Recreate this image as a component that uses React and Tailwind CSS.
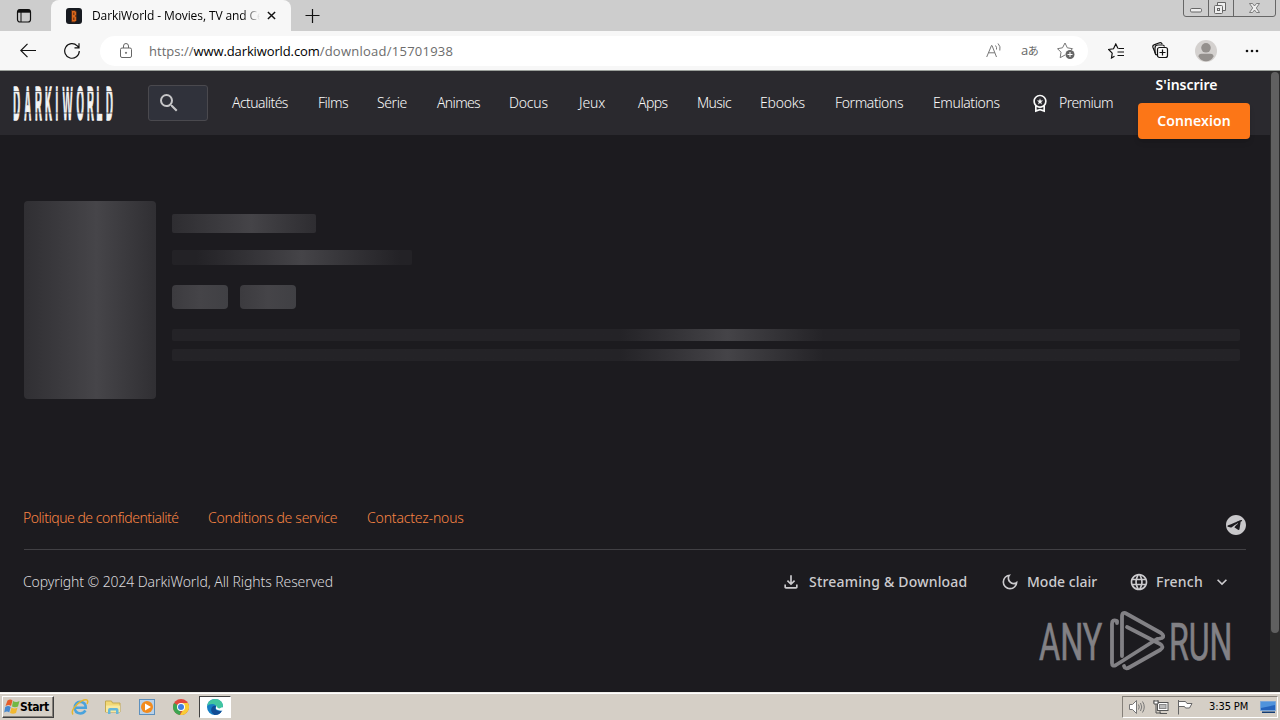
import {
  MdSearch,
  MdOutlineWorkspacePremium,
  MdOutlineFileDownload,
  MdOutlineDarkMode,
  MdLanguage,
  MdKeyboardArrowDown,
} from "react-icons/md";

const links = [
  { label: "Actualités", box: "w-[56px]", text: "tracking-[-0.55px]" },
  { label: "Films", box: "w-[29px]", text: "tracking-[-0.5px]" },
  { label: "Série", box: "w-[30px]", text: "tracking-[-0.4px]" },
  { label: "Animes", box: "w-[42px]", text: "tracking-[-0.65px]" },
  { label: "Docus", box: "w-[39px]", text: "tracking-[-0.2px]" },
  { label: "Jeux", box: "w-[30px]", text: "tracking-[-0.1px] indent-[1px]" },
  { label: "Apps", box: "w-[29px]", text: "tracking-[-0.6px]" },
  { label: "Music", box: "w-[33px]", text: "tracking-[-0.6px]" },
  { label: "Ebooks", box: "w-[45px]", text: "tracking-[-0.2px]" },
  { label: "Formations", box: "w-[68px]", text: "tracking-[-0.4px]" },
  { label: "Emulations", box: "w-[67px]", text: "tracking-[-0.4px]" },
];

const logoLetters = [
  { letter: "D", x: 3.7 },
  { letter: "A", x: 14.7 },
  { letter: "R", x: 25.4 },
  { letter: "K", x: 35.4 },
  { letter: "I", x: 43.9 },
  { letter: "W", x: 54.5 },
  { letter: "O", x: 67.2 },
  { letter: "R", x: 77.4 },
  { letter: "L", x: 86.4 },
  { letter: "D", x: 96.4 },
];

function TabBar() {
  return (
    <div className="flex h-[31px] items-start bg-[#cdcdcd]">
      <svg className="ml-4 mt-2 h-4 w-4" viewBox="0 0 16 16" fill="none" stroke="#111">
        <rect x="1.5" y="1.5" width="13" height="12.5" rx="2.5" strokeWidth="1.2" />
        <path d="M2 3.2h12" strokeWidth="3" />
        <path d="M5 4v10" />
      </svg>
      <div className="ml-[19px] flex h-[31px] w-[240px] items-center rounded-t-lg bg-[#f7f7f7] pl-[15px]">
        <svg className="h-4 w-4 shrink-0" viewBox="0 0 16 16">
          <rect width="16" height="16" rx="3" fill="#171a20" />
          <path d="M5.500 2.5h3.500l1.500 1.500v3l-1 1 1 1v3.500L9 14H5.500zM7.800 4.500v2.500M7.800 9.500v2.500" fill="#d9661b" stroke="#542b16" strokeWidth="1" />
        </svg>
        <span className="ml-[10px] w-[168px] overflow-hidden whitespace-nowrap bg-linear-to-r from-black from-88% to-[#f7f7f7] bg-clip-text font-['Open_Sans'] text-[12px] tracking-[-0.1px] text-transparent">
          DarkiWorld - Movies, TV and Ce
        </span>
        <svg className="ml-[7px] h-[9px] w-[9px] shrink-0" viewBox="0 0 10 10" stroke="#111" strokeWidth="1.6">
          <path d="M1 1l8 8M9 1l-8 8" />
        </svg>
      </div>
      <svg className="ml-[14px] mt-[9px] h-[14px] w-[15px]" viewBox="0 0 15 14" stroke="#111" strokeWidth="1.2">
        <path d="M.5 6.500h14M7.500 0v14" />
      </svg>
      <svg className="ml-auto mr-[4px] h-[17px] w-[93px]" viewBox="0 0 93 17" fill="none" stroke="#666">
        <path d="M.5 0v14q0 2.500 2.500 2.500h87q2.500 0 2.500-2.500V0M25.500 0v16M50.500 0v16" />
        <rect x="7.500" y="8.500" width="11" height="3.500" rx="1.200" fill="#eee" />
        <path d="M34.500 6V2.500h8v8h-3" fill="#eee" />
        <rect x="31.500" y="5.500" width="8" height="8" rx="1" fill="#eee" />
        <rect x="34.500" y="8.500" width="2" height="2" />
        <path d="M66.500 3.500h3l2 2.500 2-2.500h3l-3.200 4.500 3.200 4.500h-3l-2-2.500-2 2.500h-3l3.200-4.500z" fill="#eee" strokeWidth=".8" />
      </svg>
    </div>
  );
}

function Toolbar() {
  return (
    <div className="flex h-[40px] items-center border-b border-[#9ba09b] bg-[#f7f7f7] font-['Open_Sans']">
      <svg className="ml-5 h-4 w-4" viewBox="0 0 16 16" fill="none" stroke="#111" strokeWidth="1.2">
        <path d="M16 7.500H.8M7.500.8L.8 7.500l6.700 6.700" />
      </svg>
      <svg className="ml-[28px] h-4 w-4" viewBox="0 0 16 16" fill="none" stroke="#111" strokeWidth="1.2">
        <path d="M15.300 8a7.300 7.300 0 1 1-2.100-5.200L15 4.500M15 .3v4.500h-4.500" />
      </svg>
      <div className="ml-[20px] flex h-[30px] w-[988px] items-center rounded-full bg-white">
        <svg className="ml-[19px] h-4 w-[14px]" viewBox="0 0 14 16" fill="none" stroke="#666">
          <rect x="1.500" y="5" width="11" height="9.500" rx="1.500" />
          <path d="M4.500 5V3a2.500 2.500 0 0 1 5 0v2" />
          <circle cx="7" cy="9.800" r=".6" fill="#666" />
        </svg>
        <span className="ml-4 whitespace-nowrap text-[13px] leading-5 tracking-[0.03px] text-[#6c6c6c]">
          https://<span className="tracking-[-0.12px] text-black">www.darkiworld.com</span>
          <span className="tracking-[0.25px]">/download/15701938</span>
        </span>
        <svg className="ml-auto h-4 w-4" viewBox="0 0 16 16" fill="none" stroke="#777">
          <path d="M.7 14L5.500 2.500h.5L10.500 14M2.500 9.800h6.300M9.500 2.500q1.500 1.800 1 4M12 .5q3 3 1.800 7" />
        </svg>
        <span className="ml-[19px] w-[18px] whitespace-nowrap font-['Open_Sans','Noto_Sans_CJK_JP',sans-serif] text-[13px] leading-4 tracking-[-0.6px] text-[#666]">
          a<span className="text-[11px]">あ</span>
        </span>
        <svg className="ml-[18px] mr-[13px] h-[18px] w-[18px]" viewBox="0 0 18 18" fill="none" stroke="#777">
          <path d="M8 13l-4.800 2.700.8-5.500-3.500-3.500 5-.9L8 1l2.300 4.800 5.200.9-2 2" />
          <circle cx="13" cy="12.500" r="4.500" fill="#666" stroke="none" />
          <path d="M10.500 12.500h5M13 10v5" stroke="#fff" />
        </svg>
      </div>
      <svg className="ml-[20px] h-4 w-[17px]" viewBox="0 0 17 16" fill="none" stroke="#111" strokeWidth="1.2">
        <path d="M10 5.500L7.800 1 5.500 5.800.7 6.500l3.500 3.600L3.500 15l3-1.700M10.500 5.500H16M9.500 9H16M9.500 12.500H16" />
      </svg>
      <svg className="ml-[27px] h-[17px] w-[17px]" viewBox="0 0 17 17" fill="none" stroke="#111" strokeWidth="1.2">
        <rect x="5.500" y="5.500" width="10" height="10" rx="2" />
        <path d="M10.500 7.500v6M7.500 10.500h6M3.500 11.500L1 5.500Q.3 3.500 2 2.900L7.500.8q2-.5 2.700 1.500" />
        <path d="M5 13Q3 12.500 3 10.500V6q0-3 3-3h4.500q1.500 0 2 1.500" />
      </svg>
      <svg className="ml-[26px] h-[22px] w-[22px]" viewBox="0 0 22 22">
        <circle cx="11" cy="11" r="11" fill="#d4d1cf" />
        <circle cx="11" cy="7.800" r="4.800" fill="#94908d" />
        <path d="M3.500 16.500q0-2.800 3-2.800h9q3 0 3 2.800-2.500 4.800-7.500 4.800t-7.500-4.800z" fill="#94908d" />
      </svg>
      <svg className="ml-[28px] h-[4px] w-[14px]" viewBox="0 0 14 4" fill="#111">
        <circle cx="2" cy="2" r="1.300" />
        <circle cx="7" cy="2" r="1.300" />
        <circle cx="12" cy="2" r="1.300" />
      </svg>
    </div>
  );
}

function Logo() {
  return (
    <svg className="ml-[13px] h-[36px] w-[101px] shrink-0 overflow-visible" viewBox="0 0 101 36">
      <g fill="#f4f4f4" stroke="#f4f4f4" fontFamily="Liberation Sans" fontSize="47.5" fontWeight="700" textAnchor="middle">
        {logoLetters.map(({ letter, x }) => (
          <text
            key={x}
            strokeWidth={letter === "W" ? 0.5 : 1.6}
            transform={`translate(${x} 34.5) scale(${letter === "W" ? 0.225 : 0.2} 1)`}
          >
            {letter}
          </text>
        ))}
      </g>
      <path d="M0 6.500h101M0 28h101" stroke="#2a292e" strokeWidth="1.2" opacity=".65" />
    </svg>
  );
}

function TelegramIcon({ className }) {
  return (
    <svg className={className} viewBox="0 0 24 24" fill="currentColor">
      <path d="M12 2C6.480 2 2 6.480 2 12s4.480 10 10 10 10-4.480 10-10S17.520 2 12 2zm4.640 6.800c-.15 1.580-.8 5.420-1.130 7.190-.14.750-.42 1-.68 1.030-.58.050-1.020-.38-1.580-.75-.88-.58-1.380-.94-2.230-1.500-.99-.65-.35-1.010.220-1.590.150-.15 2.710-2.480 2.760-2.690.010-.030.010-.140-.070-.200-.080-.060-.190-.040-.270-.020-.120.020-1.960 1.250-5.540 3.660-.520.360-1 .530-1.420.520-.470-.010-1.370-.260-2.030-.480-.820-.270-1.470-.420-1.420-.880.030-.240.370-.490 1.020-.750 3.980-1.730 6.640-2.880 7.970-3.440 3.800-1.580 4.590-1.860 5.100-1.860.110 0 .370.030.540.170.140.120.180.280.200.450-.010.060.010.240 0 .380z" />
    </svg>
  );
}

function Header() {
  return (
    <header className="flex h-16 items-center bg-[#2a292e] text-[#fafafa]">
      <Logo />
      <div className="ml-[34px] flex h-9 w-[60px] shrink-0 items-center rounded-[3px] border border-[#4a494e] bg-[#30323b] pl-[8px]">
        <MdSearch className="h-6 w-6 text-[#c6c6c8]" />
      </div>
      <nav className="mb-[2px] ml-6 flex gap-[30px] text-[14px] font-light">
        {links.map((link) => (
          <a key={link.label} className={`whitespace-nowrap ${link.box} ${link.text}`}>
            {link.label}
          </a>
        ))}
      </nav>
      <MdOutlineWorkspacePremium className="ml-[30px] h-5 w-5 shrink-0" />
      <span className="mb-[2px] ml-[9px] w-[55px] whitespace-nowrap text-[14px] font-light tracking-[-0.55px]">Premium</span>
      <div className="ml-[24px] flex w-[112px] shrink-0 flex-col items-center self-start text-[14px] font-semibold text-white">
        <span className="mr-[15px] mt-1 h-7 whitespace-nowrap leading-5">S'inscrire</span>
        <button className="h-9 w-[112px] shrink-0 rounded bg-[#fc7617] pb-[2px] tracking-[0.1px] shadow-md">Connexion</button>
      </div>
    </header>
  );
}

function Skeletons() {
  return (
    <section className="mt-[66px] flex gap-4 pl-6">
      <div className="h-[198px] w-[132px] rounded bg-linear-to-r from-[#302f33] via-[#464549] via-55% to-[#302f33]" />
      <div className="w-[1068px] pt-[13px]">
        <div className="h-[19px] w-36 rounded-xs bg-linear-to-r from-[#2e2d31] via-[#454448] via-55% to-[#2e2d31]" />
        <div className="mt-[17px] h-[15px] w-60 rounded-xs bg-linear-to-r from-[#232226] from-10% via-[#454448] via-54% to-[#232226] to-95%" />
        <div className="mt-5 flex gap-3">
          <div className="h-6 w-14 rounded bg-linear-to-r from-[#3c3b3f] via-[#454448] to-[#404044]" />
          <div className="h-6 w-14 rounded bg-linear-to-r from-[#3c3b3f] via-[#454448] to-[#404044]" />
        </div>
        <div className="mt-5 h-3 rounded-xs bg-linear-to-r from-[#242327] from-42% via-[#454448] via-52% to-[#242327] to-61%" />
        <div className="mt-2 h-3 rounded-xs bg-linear-to-r from-[#242327] from-42% via-[#454448] via-52% to-[#242327] to-61%" />
      </div>
    </section>
  );
}

function Footer() {
  return (
    <footer className="mt-[109px] pl-6 pr-6">
      <div className="flex h-[42px] items-start border-b border-[#414044] text-[14px] font-light text-[#f98544]">
        <a className="-ml-px w-[155px] whitespace-nowrap leading-5 tracking-[-0.47px]">Politique de confidentialité</a>
        <a className="ml-[30px] w-[129px] whitespace-nowrap leading-5 tracking-[-0.3px]">Conditions de service</a>
        <a className="ml-[30px] whitespace-nowrap leading-5 tracking-[-0.17px]">Contactez-nous</a>
        <TelegramIcon className="-mr-0.5 ml-auto mt-[5px] h-6 w-6 text-[#c8c7ca]" />
      </div>
      <div className="mt-[20px] flex h-6 items-center text-[14px] font-medium text-[#cccbce]">
        <span className="mb-[2px] -ml-px whitespace-nowrap font-light tracking-[-0.1px] text-[#dad9dc]">Copyright © 2024 DarkiWorld, All Rights Reserved</span>
        <MdOutlineFileDownload className="ml-auto h-5 w-5" />
        <span className="mb-[2px] ml-2 w-[159px] whitespace-nowrap tracking-[0.2px]">Streaming & Download</span>
        <MdOutlineDarkMode className="ml-[32px] h-5 w-5" />
        <span className="mb-[2px] ml-[7px] w-[70px] whitespace-nowrap">Mode clair</span>
        <MdLanguage className="ml-[32px] h-5 w-5" />
        <span className="mb-[2px] ml-[7px] w-[48px] whitespace-nowrap tracking-[0.25px]">French</span>
        <MdKeyboardArrowDown className="ml-2 mr-[14px] h-5 w-5" />
      </div>
    </footer>
  );
}

function Watermark() {
  return (
    <svg className="absolute left-[1036px] top-[538px] h-[66px] w-[200px]" viewBox="0 0 200 66" fill="#828185" fontFamily="Roboto" fontSize="52">
      <g stroke="#828185" strokeWidth=".7">
        <text transform="translate(3 51) scale(.64 1)" textLength="99" lengthAdjust="spacingAndGlyphs">ANY</text>
        <text transform="translate(133 51) scale(.64 1)" textLength="99" lengthAdjust="spacingAndGlyphs">RUN</text>
      </g>
      <g fill="none" stroke="#828185" strokeWidth="3.8" strokeLinejoin="round" strokeLinecap="round">
        <path d="M81 14v-2q-5-2-5 3v39q0 4 4 2l41-26" />
        <path d="M86 47V8q0-6 5-3l34 19q4 3 1 5l-4 1M91 18l33 17q5 3 0 6L94 58q-5 3-6-1" />
      </g>
    </svg>
  );
}

function Taskbar() {
  return (
    <div className="flex h-7 items-center border-t border-[#f0eee9] bg-[#d5cfc6] shadow-[inset_0_1px_0_#fff]">
      <div className="ml-[2px] mt-px flex h-[22px] w-[52px] items-center border border-b-[#404040] border-l-white border-r-[#404040] border-t-white pl-px shadow-[inset_-1px_-1px_0_#858079]">
        <svg className="h-4 w-4 shrink-0" viewBox="0 0 16 16">
          <path d="M3.500 1.500q3-2 5 0L7 7q-2-2-5.500 0z" fill="#e65d29" />
          <path d="M9 2q3 2 6.500 0L14 7.500q-3 1.500-6 0z" fill="#72b844" />
          <path d="M1.200 8q3-2 5.500 0L5.200 13.500q-2-2-5 0z" fill="#4788cf" />
          <path d="M7.500 8.500q3 2 6 0L12 14q-3 1.500-6 0z" fill="#f2b830" />
        </svg>
        <span className="font-['DejaVu_Sans_Condensed','DejaVu_Sans',sans-serif] text-[12px] font-bold tracking-[-0.4px] text-black">Start</span>
      </div>
      <svg className="ml-[17px] h-[18px] w-[18px]" viewBox="0 0 18 18" fill="none">
        <path d="M14.500 12.500Q12.500 15.500 9.200 15.500q-5.500-.5-5.500-6 .5-5.500 5.500-5.800 5.600.5 5.600 6H5" stroke="#4aa3dc" strokeWidth="2.5" />
        <path d="M2 16.500Q-.5 13 6 6.500q6-5.500 10-4.500 1.500 1 0 4" stroke="#e6b72e" strokeWidth="1.5" />
      </svg>
      <svg className="ml-[16px] h-4 w-4" viewBox="0 0 16 16">
        <path d="M.5 2h6l1 2H15v9H.5z" fill="#f2d875" stroke="#c3a950" />
        <path d="M1 6.500h14V13H1z" fill="#f8e99f" />
        <path d="M3 15v-4q0-2 2-2h6.500q2 0 2 2v4h-2.500v-3.500H5.500V15z" fill="#65b7d9" />
      </svg>
      <svg className="ml-[18px] h-4 w-4" viewBox="0 0 16 16">
        <rect x=".5" y=".5" width="15" height="15" fill="#b9d1e8" stroke="#5d90bd" />
        <circle cx="8" cy="8" r="6" fill="#f28b1d" />
        <path d="M6 4.500L12 8l-6 3.500z" fill="#fff" />
      </svg>
      <svg className="ml-[18px] h-4 w-4" viewBox="0 0 16 16">
        <circle cx="8" cy="8" r="8" fill="#e2483d" />
        <path d="M8 8L1.100 4A8 8 0 0 0 7 16z" fill="#3ca551" />
        <path d="M8 8V4h6.900A8 8 0 0 1 7 16l3-5z" fill="#f9cd35" />
        <circle cx="8" cy="8" r="4" fill="#fff" />
        <circle cx="8" cy="8" r="3" fill="#407fe1" />
      </svg>
      <div className="ml-[10px] mt-px flex h-[22px] w-8 items-center justify-center border border-b-white border-l-[#404040] border-r-white border-t-[#404040] bg-white">
        <svg className="h-4 w-4" viewBox="0 0 16 16">
          <circle cx="8" cy="8" r="8" fill="#167ec4" />
          <path d="M.2 7Q1 .5 8 0q7.500.5 8 6.800-.5 3.700-4.500 3.700-3 0-2-2Q9 5 5.500 5 1.500 5 .2 7z" fill="#42c6a0" />
          <path d="M9.500 7q-2 1-1 3.300 2.500 3 6.500 1.200Q13 16 7.500 16 3 13 4.500 9q1.500-3 5-2z" fill="#124c94" />
          <path d="M10 6.500q-2 3-.5 4 3 1.500 6 1l1-1.500-1-2-3 1.500q-3 0-2.500-3z" fill="#fff" />
        </svg>
      </div>
      <div className="ml-auto mr-[2px] mt-px flex h-[22px] w-[156px] items-center border border-b-white border-l-[#858079] border-r-white border-t-[#858079] pl-[6px]">
        <svg className="h-4 w-4" viewBox="0 0 16 16" fill="none" stroke="#777">
          <path d="M.5 5.500h3l4-4v13l-4-4h-3z" fill="#fff" />
          <path d="M9.500 5.500q1.500 2.500 0 5M11.500 4q2.500 4 0 8M13.500 2.500q3.500 5.500 0 11" />
        </svg>
        <svg className="ml-[8px] h-4 w-4" viewBox="0 0 16 16" fill="#fff" stroke="#555">
          <rect x="4.500" y="3.500" width="10.500" height="8" />
          <rect x="6.500" y="5.500" width="6.500" height="4" fill="#bbb" stroke="#888" />
          <path d="M7 12v2.500h7M1 1v3.500h4V1M3 5v9h5" fill="none" />
          <path d="M1 2h4v3H1z" />
        </svg>
        <svg className="ml-[8px] h-4 w-4" viewBox="0 0 16 16" fill="#fff" stroke="#666">
          <path d="M1.500 1v14.500M1.500 2.500h7l1.500 2h5l-2.500 4.500H8.500L7.500 7.500h-6" />
        </svg>
        <span className="ml-4 w-[40px] whitespace-nowrap font-['DejaVu_Sans_Condensed','DejaVu_Sans',sans-serif] text-[11px] tracking-[-0.1px] text-black">3:35 PM</span>
        <svg className="ml-[11px] h-[14px] w-4" viewBox="0 0 16 14">
          <path d="M.5 1.500h15v9H.5z" fill="#2463bc" stroke="#7aa6d9" />
          <path d="M1 2h14v3L1 8z" fill="#4f93dc" />
          <path d="M2 11.500h13v1.500H2z" fill="#123c74" />
        </svg>
      </div>
    </div>
  );
}

export default function App() {
  return (
    <div className="flex h-[720px] w-[1280px] flex-col overflow-hidden bg-[#1c1b1f] font-['Noto_Sans',sans-serif]">
      <TabBar />
      <Toolbar />
      <div className="relative flex h-[621px]">
        <main className="w-[1270px]">
          <Header />
          <Skeletons />
          <Footer />
        </main>
        <div className="w-[10px] bg-[#2b2b2b] px-px pt-px">
          <div className="h-[561px] rounded-full bg-[#606060]" />
        </div>
        <Watermark />
      </div>
      <Taskbar />
    </div>
  );
}
